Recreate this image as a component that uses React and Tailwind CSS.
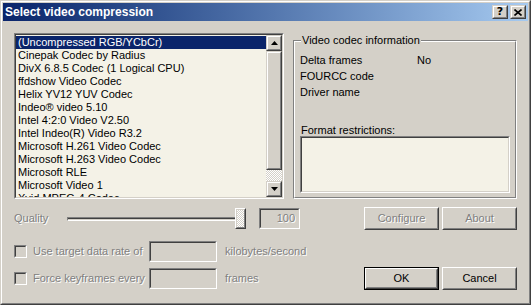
import React from "react";

const codecs = [
  "(Uncompressed RGB/YCbCr)",
  "Cinepak Codec by Radius",
  "DivX 6.8.5 Codec (1 Logical CPU)",
  "ffdshow Video Codec",
  "Helix YV12 YUV Codec",
  "Indeo® video 5.10",
  "Intel 4:2:0 Video V2.50",
  "Intel Indeo(R) Video R3.2",
  "Microsoft H.261 Video Codec",
  "Microsoft H.263 Video Codec",
  "Microsoft RLE",
  "Microsoft Video 1",
  "Xvid MPEG-4 Codec",
];

const disabled = "text-[#808080] [text-shadow:1px_1px_0_#ffffff]";

function Sunken({ className = "", inner = "", children }) {
  return (
    <div className={`border border-t-[#808080] border-l-[#808080] border-b-white border-r-white ${className}`}>
      <div className={`h-full w-full border border-t-[#404040] border-l-[#404040] border-b-[#d4d0c8] border-r-[#d4d0c8] ${inner}`}>
        {children}
      </div>
    </div>
  );
}

function Raised({ className = "", inner = "", children }) {
  return (
    <div className={`border border-t-[#d4d0c8] border-l-[#d4d0c8] border-b-[#404040] border-r-[#404040] ${className}`}>
      <div className={`h-full w-full border border-t-white border-l-white border-b-[#808080] border-r-[#808080] bg-[#d4d0c8] ${inner}`}>
        {children}
      </div>
    </div>
  );
}

function Button({ label, off, isDefault }) {
  const body = (
    <div className="h-full w-full border border-t-white border-l-white border-b-[#404040] border-r-[#404040]">
      <div className={`h-full w-full border border-t-[#d4d0c8] border-l-[#d4d0c8] border-b-[#808080] border-r-[#808080] flex items-center justify-center ${off ? disabled : "text-black"}`}>
        {label}
      </div>
    </div>
  );
  if (isDefault) {
    return <div className="w-[75px] h-[23px] border border-black">{body}</div>;
  }
  return <div className="w-[75px] h-[23px]">{body}</div>;
}

function Arrow({ down }) {
  return (
    <svg width="7" height="4" viewBox="0 0 7 4">
      {down ? <polygon points="0,0 7,0 3.5,4" fill="#000" /> : <polygon points="0,4 7,4 3.5,0" fill="#000" />}
    </svg>
  );
}

function Checkbox({ label }) {
  return (
    <div className="w-[135px] flex items-center">
      <Sunken className="w-[13px] h-[13px]" inner="bg-[#d4d0c8]" />
      <span className={`ml-[6px] whitespace-nowrap ${disabled}`}>{label}</span>
    </div>
  );
}

export default function App() {
  return (
    <div className="w-[531px] h-[305px] bg-[#d4d0c8] border border-t-[#d4d0c8] border-l-[#d4d0c8] border-b-[#404040] border-r-[#404040] font-['Liberation_Sans',Arial,sans-serif] text-[11px] leading-[13px] text-black select-none">
      <div className="h-full border border-t-white border-l-white border-b-[#808080] border-r-[#808080] p-px flex flex-col">
        {/* title bar */}
        <div className="h-[18px] bg-gradient-to-r from-[#0a246a] to-[#a6caf0] flex items-center pl-[2px] pr-[2px]">
          <span className="text-white font-bold text-[12px] flex-1">Select video compression</span>
          <Raised className="w-[16px] h-[14px]" inner="flex items-center justify-center">
            <span className="font-bold text-[11px] leading-[10px] font-['DejaVu_Sans',sans-serif]">?</span>
          </Raised>
          <Raised className="w-[16px] h-[14px] ml-[2px]" inner="flex items-center justify-center">
            <svg width="8" height="7" viewBox="0 0 8 7">
              <path d="M0.5 0.5 L7.5 6.5 M7.5 0.5 L0.5 6.5" stroke="#000" strokeWidth="1.6" />
            </svg>
          </Raised>
        </div>

        <div className="px-[11px] pt-[12px] flex flex-col">
          {/* list + info */}
          <div className="flex">
            <Sunken className="w-[270px] h-[166px]" inner="bg-[#f4f2e7] flex overflow-hidden">
              <div className="flex-1 overflow-hidden pt-px">
                {codecs.map((c, i) => (
                  <div
                    key={c}
                    className={`h-[13px] leading-[13px] pl-[2px] whitespace-nowrap ${i === 0 ? "bg-[#0a246a] text-white" : ""}`}
                  >
                    {c}
                  </div>
                ))}
              </div>
              <div className="w-[16px] flex flex-col">
                <Raised className="h-[16px]" inner="flex items-center justify-center">
                  <Arrow />
                </Raised>
                <Raised className="h-[119px]" />
                <div className="flex-1 bg-[repeating-conic-gradient(#d4d0c8_0%_25%,#ffffff_0%_50%)] bg-[length:2px_2px]" />
                <Raised className="h-[16px]" inner="flex items-center justify-center">
                  <Arrow down />
                </Raised>
              </div>
            </Sunken>

            <div className="relative ml-[9px] mt-[7px] flex-1 h-[159px] border border-t-[#808080] border-l-[#808080] border-b-white border-r-white">
              <div className="h-full border border-t-white border-l-white border-b-[#808080] border-r-[#808080] pl-[5px] pt-[10px] pr-[5px]">
                <div className="flex h-[16px] items-center">
                  <span className="w-[117px]">Delta frames</span>
                  <span>No</span>
                </div>
                <div className="flex h-[16px] items-center">FOURCC code</div>
                <div className="flex h-[16px] items-center">Driver name</div>
                <div className="mt-[24px] h-[12px] pl-px">Format restrictions:</div>
                <Sunken className="w-[210px] h-[57px]" inner="bg-[#f4f2e7]" />
              </div>
              <span className="absolute left-[7px] top-[-7px] px-px bg-[#d4d0c8] leading-[13px]">
                Video codec information
              </span>
            </div>
          </div>

          {/* quality row */}
          <div className="flex items-center h-[23px] mt-[8px]">
            <span className={`w-[53px] ${disabled}`}>Quality</span>
            <div className="flex items-center">
              <div className="w-[178px] h-[4px] border border-t-[#808080] border-l-[#808080] border-b-white border-r-white">
                <div className="h-full border-t border-t-[#404040]" />
              </div>
              <div className="-ml-[10px] w-[11px] h-[21px] border border-t-white border-l-white border-b-[#404040] border-r-[#404040]">
                <div className="h-full border border-t-[#d4d0c8] border-l-[#d4d0c8] border-b-[#808080] border-r-[#808080] bg-[repeating-conic-gradient(#d4d0c8_0%_25%,#ffffff_0%_50%)] bg-[length:2px_2px]" />
              </div>
            </div>
            <Sunken className="ml-[13px] w-[41px] h-[21px]" inner="bg-[#d4d0c8] flex items-center justify-end pr-[3px]">
              <span className={disabled}>100</span>
            </Sunken>
            <div className="ml-auto flex gap-[3px]">
              <Button label="Configure" off />
              <Button label="About" off />
            </div>
          </div>

          {/* data rate row */}
          <div className="flex items-center h-[21px] mt-[11px]">
            <Checkbox label="Use target data rate of" />
            <Sunken className="w-[68px] h-[21px]" inner="bg-[#d4d0c8]" />
            <span className={`ml-[8px] ${disabled}`}>kilobytes/second</span>
          </div>

          {/* keyframes row */}
          <div className="flex items-center h-[23px] mt-[5px]">
            <Checkbox label="Force keyframes every" />
            <Sunken className="w-[68px] h-[21px]" inner="bg-[#d4d0c8]" />
            <span className={`ml-[8px] ${disabled}`}>frames</span>
            <div className="ml-auto flex gap-[3px]">
              <Button label="OK" isDefault />
              <Button label="Cancel" />
            </div>
          </div>
        </div>
      </div>
    </div>
  );
}
